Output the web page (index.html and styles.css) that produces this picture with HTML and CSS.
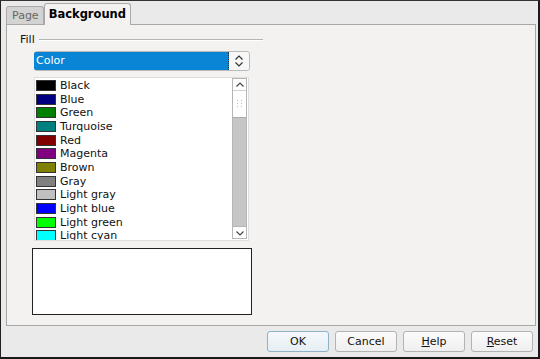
FILE: index.html
```html
<!DOCTYPE html>
<html lang="en">
<head>
    <meta charset="UTF-8">
    <title>Area</title>
<link rel="stylesheet" href="styles.css">
</head>
<body>
    <div class="window">
        <div class="tabs">
            <div class="tab">Page</div>
            <div class="tab active">Background</div>
        </div>
        <div class="panel">
            <div class="fill-title">
                <span>Fill</span>
                <div class="rule"></div>
            </div>
            <div class="fill-body">
                <div class="combo">
                    <div class="combo-value">Color</div>
                    <div class="combo-spin">
                        <svg width="10" height="14" viewBox="0 0 10 14"><path d="M1.5 5.5 L5 2 L8.5 5.5 M1.5 8.5 L5 12 L8.5 8.5" fill="none" stroke="#333" stroke-width="1.2"/></svg>
                    </div>
                </div>
                <div class="list">
                    <div class="items">
                        <div class="item"><span class="swatch" style="background:#000000"></span>Black</div>
                        <div class="item"><span class="swatch" style="background:#000080"></span>Blue</div>
                        <div class="item"><span class="swatch" style="background:#008000"></span>Green</div>
                        <div class="item"><span class="swatch" style="background:#008080"></span>Turquoise</div>
                        <div class="item"><span class="swatch" style="background:#800000"></span>Red</div>
                        <div class="item"><span class="swatch" style="background:#800080"></span>Magenta</div>
                        <div class="item"><span class="swatch" style="background:#808000"></span>Brown</div>
                        <div class="item"><span class="swatch" style="background:#808080"></span>Gray</div>
                        <div class="item"><span class="swatch" style="background:#c0c0c0"></span>Light gray</div>
                        <div class="item"><span class="swatch" style="background:#0000ff"></span>Light blue</div>
                        <div class="item"><span class="swatch" style="background:#00ff00"></span>Light green</div>
                        <div class="item"><span class="swatch" style="background:#00ffff"></span>Light cyan</div>
                    </div>
                    <div class="scrollbar">
                        <div class="sb-btn">
                            <svg width="10" height="8" viewBox="0 0 10 8"><path d="M1.5 5.5 L5 2 L8.5 5.5" fill="none" stroke="#444" stroke-width="1.2"/></svg>
                        </div>
                        <div class="sb-thumb">
                            <svg width="6" height="10" viewBox="0 0 6 10"><g fill="#bbb"><rect x="0" y="1" width="1" height="1"/><rect x="4" y="1" width="1" height="1"/><rect x="0" y="4" width="1" height="1"/><rect x="4" y="4" width="1" height="1"/><rect x="0" y="7" width="1" height="1"/><rect x="4" y="7" width="1" height="1"/></g></svg>
                        </div>
                        <div class="sb-track"></div>
                        <div class="sb-btn">
                            <svg width="10" height="8" viewBox="0 0 10 8"><path d="M1.5 2.5 L5 6 L8.5 2.5" fill="none" stroke="#444" stroke-width="1.2"/></svg>
                        </div>
                    </div>
                </div>
                <div class="preview"></div>
            </div>
        </div>
        <div class="buttons">
            <button class="btn default">OK</button>
            <button class="btn">Cancel</button>
            <button class="btn"><u>H</u>elp</button>
            <button class="btn"><u>R</u>eset</button>
        </div>
    </div>
</body>
</html>
```

FILE: styles.css
```css
body {
    margin: 0;
    font-family: "DejaVu Sans", sans-serif;
    font-size: 11px;
    color: #111;
}
.window {
    width: 540px;
    height: 359px;
    box-sizing: border-box;
    border-top: 1px solid #333;
    border-left: 1px solid #222;
    border-right: 2px solid #1a1a1a;
    border-bottom: 2px solid #1a1a1a;
    background-color: #ebeaea;
    display: flex;
    flex-direction: column;
}
.tabs {
    display: flex;
    align-items: flex-end;
    height: 23px;
    padding-left: 5px;
    position: relative;
    z-index: 1;
}
.tab {
    height: 17px;
    line-height: 17px;
    padding: 0 4px 0 5px;
    border: 1px solid #a9a9a9;
    border-bottom: none;
    border-radius: 3px 3px 0 0;
    background-color: #d3d3d3;
    color: #666;
    margin-bottom: 0;
}
.tab.active {
    height: 21px;
    line-height: 20px;
    padding: 0 4px;
    background-color: #f3f2f1;
    color: #000;
    font-weight: bold;
    font-size: 11.5px;
    margin-bottom: -1px;
    margin-left: 0;
}
.panel {
    margin-left: 5px;
    margin-right: 2px;
    height: 302px;
    box-sizing: border-box;
    border: 1px solid #a7a7a7;
    background-color: #f3f2f1;
    padding: 7px 0 0 13px;
}
.fill-title {
    display: flex;
    align-items: center;
    width: 243px;
    gap: 4px;
    height: 14px;
}
.fill-title .rule {
    flex: 1;
    border-top: 1px solid #b5b5b5;
    border-bottom: 1px solid #fff;
    margin-top: 1px;
}
.fill-body {
    margin-left: 14px;
    margin-top: 5px;
}
.combo {
    width: 216px;
    height: 20px;
    box-sizing: border-box;
    display: flex;
    border: 1px solid #b9b9b9;
    border-radius: 3px;
    background-color: #fff;
}
.combo-value {
    flex: 1;
    margin: 0 0 0 -1px;
    background-color: #0a85d6;
    color: #fff;
    line-height: 18px;
    padding-left: 2px;
    border-right: 1px dotted #333;
    border-radius: 2px 0 0 2px;
}
.combo-spin {
    width: 20px;
    display: flex;
    align-items: center;
    justify-content: center;
    background-color: #f7f7f7;
    border-radius: 0 3px 3px 0;
}
.list {
    margin-top: 6px;
    width: 215px;
    height: 164px;
    box-sizing: border-box;
    background-color: #fff;
    border: 1px solid #dedede;
    display: flex;
}
.items {
    flex: 1;
    overflow: hidden;
    padding-top: 0.5px;
}
.item {
    height: 13.7px;
    display: flex;
    align-items: center;
    gap: 4px;
    padding-left: 1px;
    color: #111;
}
.swatch {
    width: 18px;
    height: 9px;
    border: 1px solid #333;
    flex: none;
}
.scrollbar {
    width: 13px;
    margin: 0 1px 1px 0;
    display: flex;
    flex-direction: column;
    border: 1px solid #b5b5b5;
    border-top-width: 0;
}
.sb-btn {
    height: 11px;
    display: flex;
    align-items: center;
    justify-content: center;
    background-color: #fff;
    border-top: 1px solid #b5b5b5;
}
.sb-thumb {
    height: 26px;
    background-color: #fff;
    border-top: 1px solid #d0d0d0;
    display: flex;
    align-items: center;
    justify-content: center;
}
.sb-track {
    flex: 1;
    background-color: #c6c6c6;
    border-top: 1px solid #aaa;
}
.preview {
    margin-top: 7px;
    margin-left: -2px;
    width: 220px;
    height: 67px;
    box-sizing: border-box;
    background-color: #fff;
    border: 1px solid #222;
}
.buttons {
    display: flex;
    justify-content: flex-end;
    gap: 6px;
    padding: 5px 5px 0 0;
}
.btn {
    width: 62px;
    height: 21px;
    font-family: "DejaVu Sans", sans-serif;
    font-size: 11px;
    color: #111;
    background: linear-gradient(#fbfbfb, #efefef);
    border: 1px solid #b3b3b3;
    border-radius: 3px;
    padding: 0;
}
.btn.default {
    border-color: #8fb2c8;
    background: linear-gradient(#f4f8fb, #e6eef3);
}
.btn u {
    text-decoration: underline;
}
```
